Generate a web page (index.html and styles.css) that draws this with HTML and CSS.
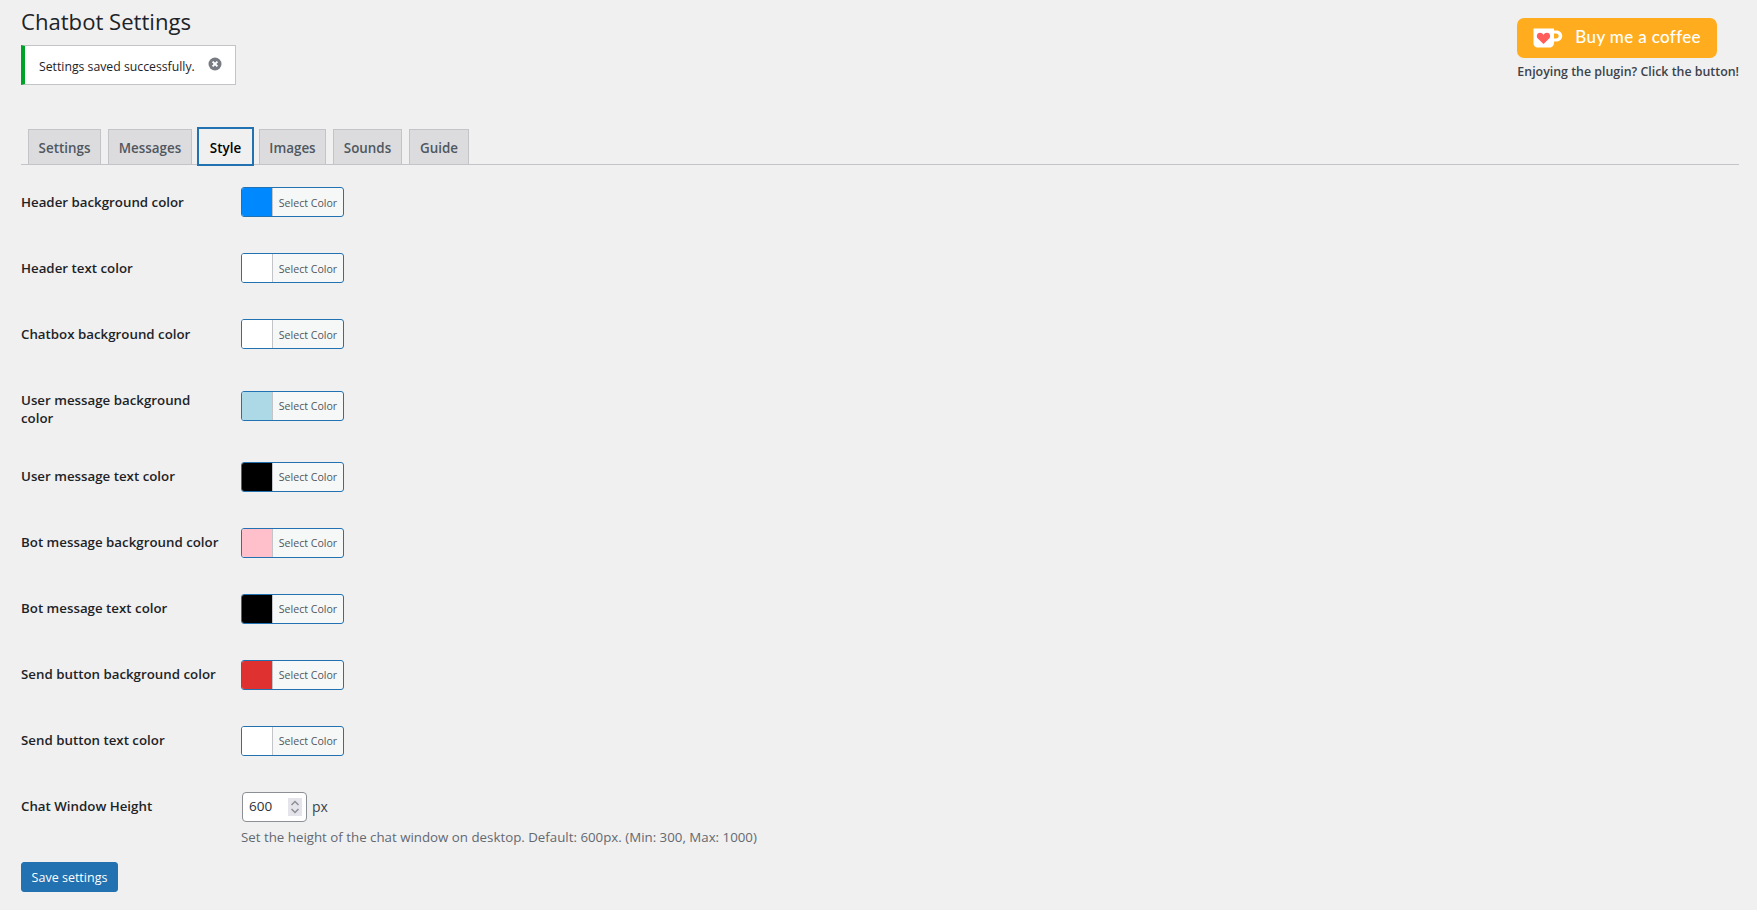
FILE: index.html
```html
<!DOCTYPE html>
<html lang="en">
<head>
<meta charset="utf-8">
<title>Chatbot Settings</title>
<link rel="stylesheet" href="styles.css">
</head>
<body>
<div class="wrap">
  <header class="top">
    <div class="top-left">
      <h1 class="title">Chatbot Settings</h1>
      <div class="notice">
        <p class="notice-text">Settings saved successfully.</p>
        <svg class="dismiss" viewBox="0 0 16 16" width="16" height="16" aria-hidden="true">
          <circle cx="8" cy="8" r="6.5" fill="#787c82"/>
          <path d="M5.6 5.6l4.8 4.8M10.4 5.6l-4.8 4.8" stroke="#fff" stroke-width="2" fill="none"/>
        </svg>
      </div>
    </div>
    <div class="support">
      <a class="coffee" href="#">
        <svg class="cup" viewBox="0 0 30 20" width="30" height="20" aria-hidden="true">
          <path d="M0.500 0.500h20.500v2h2.500c3.200 0 5.700 2.400 5.700 5.500s-2.500 5.500-5.700 5.500h-2.500v1.500c0 2.200-1.800 4.500-4 4.500H4.500C2.300 19.500.5 17.700.5 15.500z" fill="#fff"/>
          <path d="M21 5.500h2c1.500 0 2.700 1.100 2.700 2.500s-1.200 2.500-2.700 2.500h-2z" fill="#ffad1f"/>
          <path d="M10.500 16L4.800 10.500C3 8.600 3.900 4.800 7 4.800c1.500 0 2.800.8 3.500 2.100.7-1.300 2-2.100 3.500-2.100 3.100 0 4 3.800 2.200 5.700z" fill="#ff5e5b"/>
        </svg>
        <span class="coffee-label">Buy me a coffee</span>
      </a>
      <p class="support-note">Enjoying the plugin? Click the button!</p>
    </div>
  </header>

  <nav class="tabs">
    <a class="tab" href="#">Settings</a>
    <a class="tab" href="#">Messages</a>
    <a class="tab tab-active" href="#">Style</a>
    <a class="tab" href="#">Images</a>
    <a class="tab" href="#">Sounds</a>
    <a class="tab" href="#">Guide</a>
  </nav>

  <form class="settings">
    <table class="form-table">
      <tbody>
        <tr><th>Header background color</th><td><button type="button" class="color-btn"><span class="swatch swatch-blue"></span><span class="color-text">Select Color</span></button></td></tr>
        <tr><th>Header text color</th><td><button type="button" class="color-btn"><span class="swatch swatch-white"></span><span class="color-text">Select Color</span></button></td></tr>
        <tr><th>Chatbox background color</th><td><button type="button" class="color-btn"><span class="swatch swatch-white"></span><span class="color-text">Select Color</span></button></td></tr>
        <tr><th>User message background color</th><td><button type="button" class="color-btn"><span class="swatch swatch-lightblue"></span><span class="color-text">Select Color</span></button></td></tr>
        <tr><th>User message text color</th><td><button type="button" class="color-btn"><span class="swatch swatch-black"></span><span class="color-text">Select Color</span></button></td></tr>
        <tr><th>Bot message background color</th><td><button type="button" class="color-btn"><span class="swatch swatch-pink"></span><span class="color-text">Select Color</span></button></td></tr>
        <tr><th>Bot message text color</th><td><button type="button" class="color-btn"><span class="swatch swatch-black"></span><span class="color-text">Select Color</span></button></td></tr>
        <tr><th>Send button background color</th><td><button type="button" class="color-btn"><span class="swatch swatch-red"></span><span class="color-text">Select Color</span></button></td></tr>
        <tr><th>Send button text color</th><td><button type="button" class="color-btn"><span class="swatch swatch-white"></span><span class="color-text">Select Color</span></button></td></tr>
        <tr>
          <th>Chat Window Height</th>
          <td class="height-cell">
            <div class="height-line">
              <div class="number-box">
                <span class="number-value">600</span>
                <span class="spinner">
                  <svg viewBox="0 0 14 16" aria-hidden="true">
                    <path d="M3.500 6L7 2.500 10.500 6M3.500 10L7 13.500 10.500 10" fill="none" stroke="#8c8f94" stroke-width="1.500"/>
                  </svg>
                </span>
              </div>
              <span class="unit">px</span>
            </div>
            <p class="description">Set the height of the chat window on desktop. Default: 600px. (Min: 300, Max: 1000)</p>
          </td>
        </tr>
      </tbody>
    </table>
    <button type="button" class="save">Save settings</button>
  </form>
</div>
</body>
</html>
```

FILE: styles.css
```css
* { box-sizing: border-box; }

html, body { height: 100%; }

body {
  margin: 0;
  background: #f0f0f1;
  color: #1d2327;
  font-family: "Open Sans", "Noto Sans", sans-serif;
  font-size: 13px;
  line-height: 1.4;
  overflow: hidden;
}

.wrap {
  padding: 0 18px 0 21px;
}

.top {
  display: flex;
  justify-content: space-between;
  align-items: flex-start;
  height: 129px;
}

.title {
  margin: 0;
  padding: 7px 0 6px;
  font-size: 22.1px;
  font-weight: 400;
  line-height: 29px;
  color: #1d2327;
}

.notice {
  display: flex;
  align-items: center;
  justify-content: space-between;
  width: 215px;
  height: 40px;
  margin-top: 3px;
  padding: 0 12px 0 14px;
  background: #fff;
  border: 1px solid #c3c4c7;
  border-left: 4px solid #00a32a;
}

.notice-text {
  margin: 4px 0 0;
  font-size: 12.25px;
  white-space: nowrap;
}

.dismiss { flex: none; margin-top: -3px; }

.support {
  display: flex;
  flex-direction: column;
  align-items: flex-start;
  padding-top: 18px;
}

.coffee {
  display: flex;
  align-items: center;
  gap: 12px;
  width: 200px;
  height: 40px;
  padding-left: 16px;
  background: #ffad1f;
  border-radius: 7px;
  color: #fff;
  text-decoration: none;
}

.cup { flex: none; }

.coffee-label {
  margin-top: -2px;
  font-family: "Lato", sans-serif;
  font-size: 17px;
  font-weight: 500;
  letter-spacing: 0.35px;
}

.support-note {
  margin: 5px 0 0;
  font-size: 12.4px;
  font-weight: 600;
  color: #3c434a;
  white-space: nowrap;
}

.tabs {
  display: grid;
  grid-template-columns: 73px 84px 53px 67px 69px 60px;
  column-gap: 7px;
  height: 36px;
  padding-left: 7px;
  border-bottom: 1px solid #c3c4c7;
}

.tab {
  display: flex;
  align-items: center;
  justify-content: center;
  height: 35px;
  padding-top: 2px;
  background: #dcdcde;
  border: 1px solid #c3c4c7;
  border-bottom: 0;
  color: #50575e;
  font-size: 13.4px;
  font-weight: 600;
  text-decoration: none;
}

.tab-active {
  height: 39px;
  margin: -2px -2px 0;
  padding-top: 3px;
  background: #f0f0f1;
  border: 2px solid #2271b1;
  color: #000;
}

.form-table {
  width: 100%;
  margin-top: 7px;
  border-collapse: collapse;
}

.form-table th {
  width: 220px;
  padding: 21px 20px 19px 0;
  text-align: left;
  vertical-align: top;
  font-size: 13.3px;
  font-weight: 600;
  line-height: 18.2px;
  color: #1d2327;
}

.form-table td {
  padding: 15.4px 10px 14.6px 0;
  vertical-align: middle;
}

.color-btn {
  display: flex;
  width: 103px;
  height: 30px;
  margin: 0 0 6px;
  padding: 0;
  background: #f6f7f7;
  border: 1px solid #2271b1;
  border-radius: 3px;
  overflow: hidden;
  font-family: inherit;
}

.color-text {
  display: flex;
  align-items: center;
  justify-content: center;
  flex: 1;
  height: 100%;
  padding-top: 1px;
  border-left: 1px solid #c3c4c7;
  font-size: 10.6px;
  color: #50575e;
}

.swatch { display: block; width: 30px; height: 100%; }
.swatch-blue { background: #0088ff; }
.swatch-white { background: #fff; }
.swatch-lightblue { background: #add8e6; }
.swatch-black { background: #000; }
.swatch-pink { background: #ffc0cb; }
.swatch-red { background: #e03131; }

.height-line {
  display: flex;
  align-items: center;
  gap: 5px;
  padding-left: 1px;
}

.number-box {
  display: flex;
  align-items: center;
  justify-content: space-between;
  width: 65px;
  height: 30px;
  padding: 0 4px 0 6px;
  background: #fff;
  border: 1px solid #8c8f94;
  border-radius: 4px;
  font-size: 13.5px;
  color: #2c3338;
}

.spinner {
  display: block;
  width: 14px;
  height: 18px;
  background: #e4e4ea;
}

.spinner svg { display: block; width: 14px; height: 18px; }

.unit { font-size: 14px; color: #3c434a; }

.description {
  margin: 6px 0 0;
  font-size: 13.3px;
  color: #646970;
}

.save {
  display: block;
  width: 97px;
  height: 30px;
  margin-top: 1.2px;
  padding: 1px 0 0;
  background: #2271b1;
  border: 1px solid #2271b1;
  border-radius: 3px;
  color: #fff;
  font-family: inherit;
  font-size: 12.5px;
}
```
